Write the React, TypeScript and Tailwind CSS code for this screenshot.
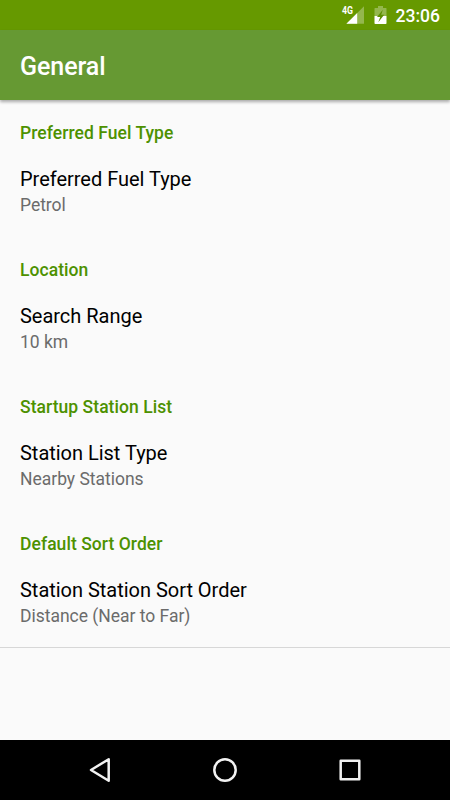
import React from "react";

const sections = [
  { header: "Preferred Fuel Type", title: "Preferred Fuel Type", summary: "Petrol" },
  { header: "Location", title: "Search Range", summary: "10 km" },
  { header: "Startup Station List", title: "Station List Type", summary: "Nearby Stations" },
  { header: "Default Sort Order", title: "Station Station Sort Order", summary: "Distance (Near to Far)" },
];

function StatusBar() {
  return (
    <div className="flex h-[30px] shrink-0 items-center justify-end bg-[#669900] pr-[10px] text-white">
      <svg className="mr-[2px] h-[30px] w-[54px]" viewBox="340 0 54 30">
        <text x="342" y="14" fontSize="10" fontWeight="700" textLength="11" lengthAdjust="spacingAndGlyphs" fill="white">4G</text>
        <path d="M364 6.200V23.800H346.400Z" fill="white" fillOpacity=".3" />
        <path d="M357.200 13V23.800H346.400Z" fill="white" />
        <path d="M374.500 8.500Q374.500 8 375 8H378V6H383V8H386Q386.500 8 386.500 8.500V16H374.500Z" fill="white" fillOpacity=".3" />
        <path d="M374.500 16H386.500V23.200Q386.500 24 385.700 24H375.300Q374.500 24 374.500 23.200Z" fill="white" />
        <path d="M382.800 9.800L377 17H380.200L378.300 22.200L384.200 14.800H381.200Z" fill="#5c8f00" />
      </svg>
      <span className="pt-px text-[17.500px] leading-[30px] font-medium">23:06</span>
    </div>
  );
}

export default function App() {
  return (
    <div className="flex h-[800px] w-[450px] flex-col overflow-hidden bg-[#fafafa] font-['Roboto',sans-serif]">
      <StatusBar />
      <header className="flex h-[70px] shrink-0 items-center bg-[#669933] px-5 pt-[4px] shadow-[0_2px_3px_rgba(0,0,0,0.32)]">
        <h1 className="text-[25px] font-medium tracking-[-0.05px] text-white">General</h1>
      </header>
      <main className="flex-1">
        {sections.map((s) => (
          <section key={s.header} className="h-[137px] px-5 pt-[22px] last:border-b last:border-[#d7d7d7]">
            <h2 className="text-[17.500px] leading-[22px] font-medium tracking-[0.05px] text-[#4d9100]">{s.header}</h2>
            <p className="mt-[22px] text-[20px] leading-[27px] tracking-[-0.02px] text-black">{s.title}</p>
            <p className="text-[17.500px] leading-[24px] tracking-[-0.02px] text-[#6b6b6b]">{s.summary}</p>
          </section>
        ))}
      </main>
      <nav className="flex h-[60px] shrink-0 items-center bg-black">
        <svg className="h-[60px] w-[450px]" viewBox="0 740 450 60" fill="none" stroke="#f2f2f2" strokeWidth="2.500" strokeLinejoin="round">
          <path d="M108.700 759.200V780.800L91 770Z" />
          <circle cx="225" cy="770" r="10.700" />
          <rect x="340.700" y="760.700" width="18.600" height="18.600" />
        </svg>
      </nav>
    </div>
  );
}
